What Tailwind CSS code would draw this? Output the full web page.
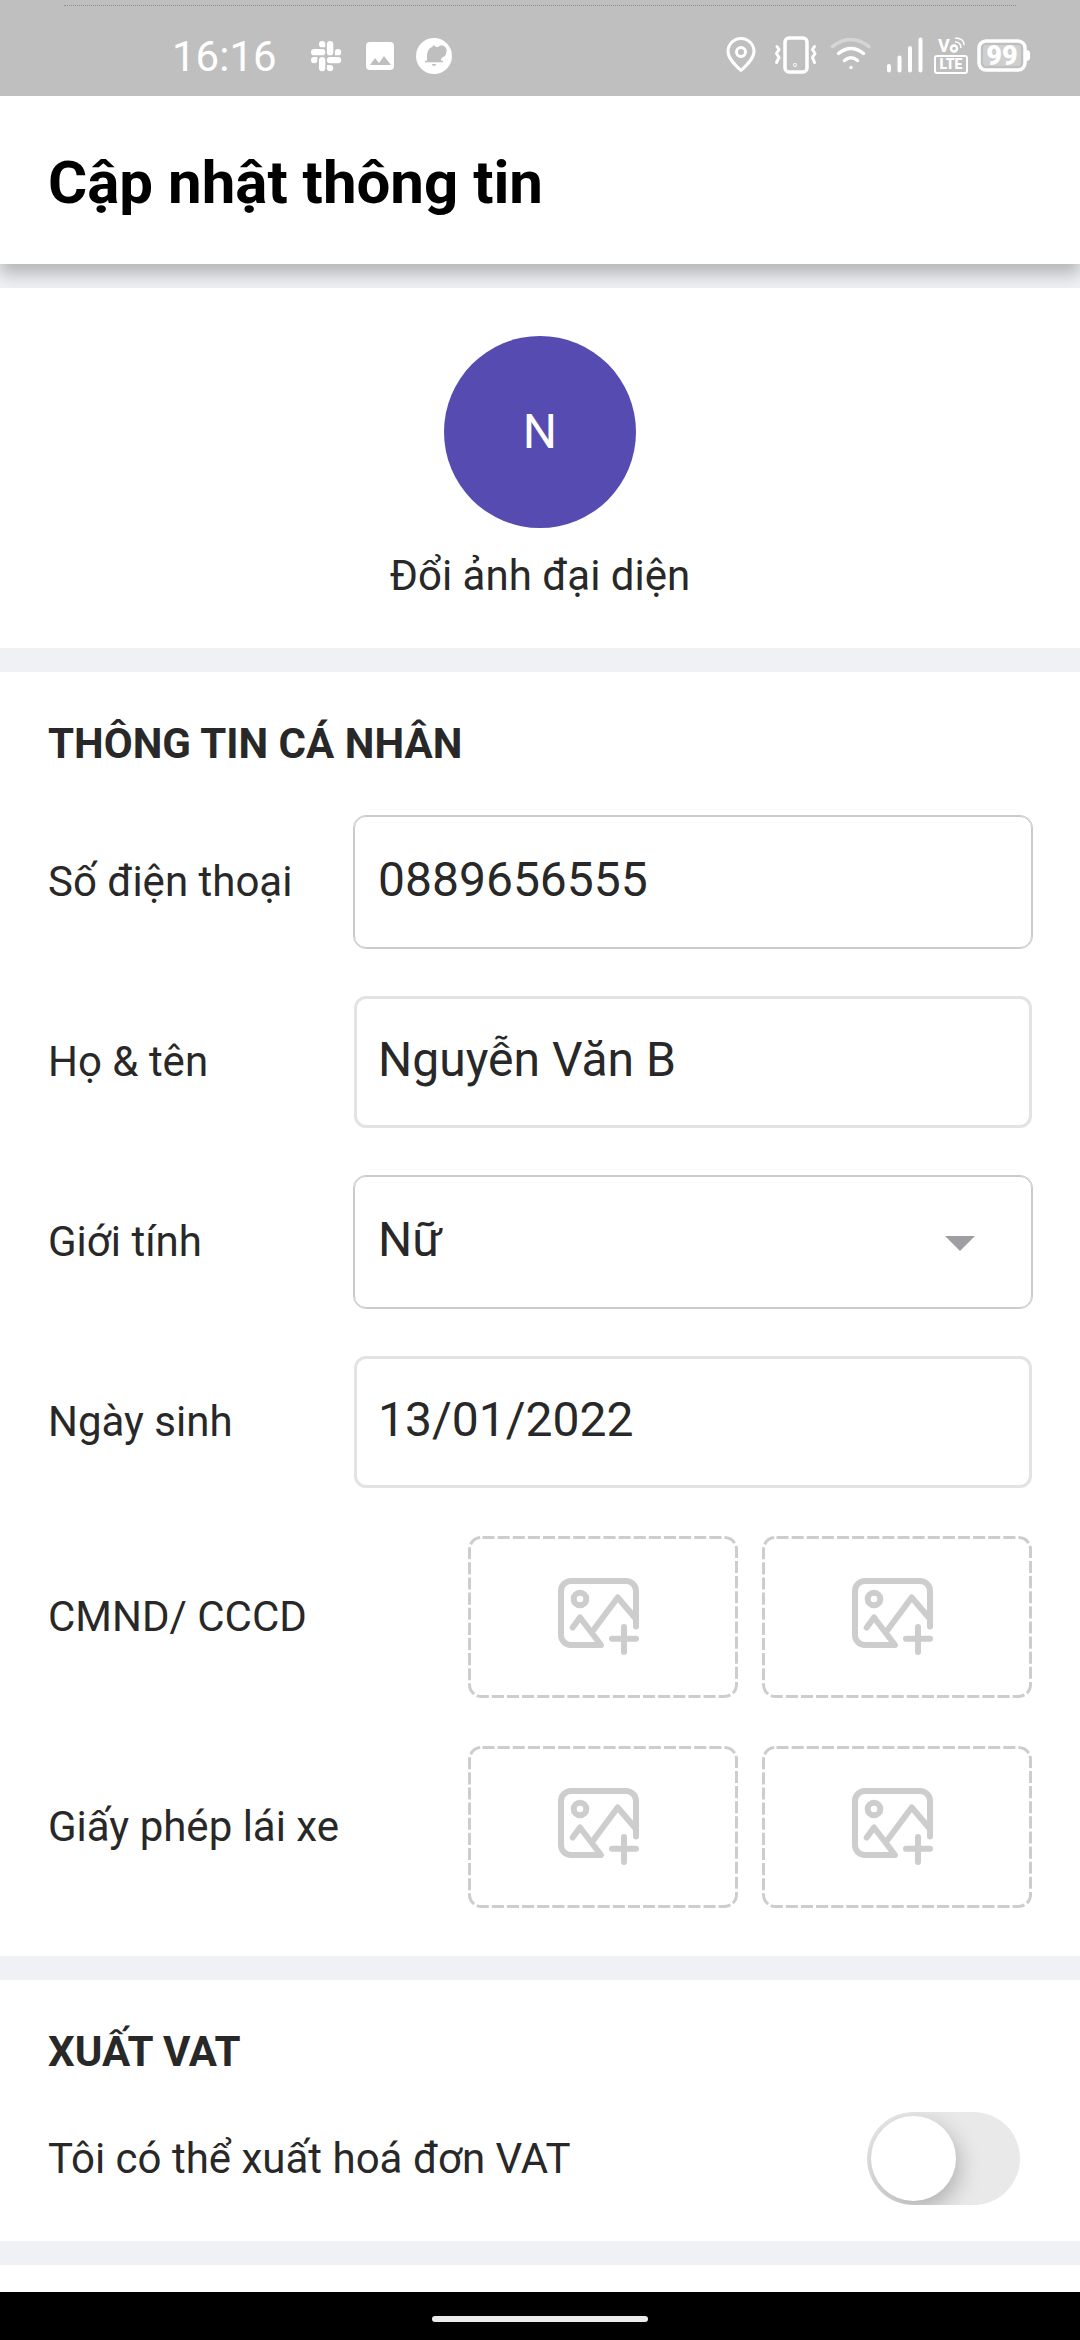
<!DOCTYPE html>
<html lang="vi">
<head>
  <meta charset="UTF-8">
  <meta name="viewport" content="width=device-width, initial-scale=1.0">
  <title>Cập nhật thông tin</title>
  <script src="https://cdn.jsdelivr.net/npm/@tailwindcss/browser@4"></script>
</head>
<body class="min-h-screen flex flex-col bg-[#f0f1f5] font-[Roboto,'Noto_Sans',sans-serif] text-[42px] leading-[48px] text-[#282828]">

  <!-- Status bar -->
  <div class="relative z-10 h-24 shrink-0 bg-[#bfbfbf] text-white flex items-center justify-between pt-4 pl-[172px] pr-[49px]">
    <div class="absolute top-[5px] left-16 right-16 border-t border-dotted border-[#8f8f8f]"></div>
    <div class="flex items-center gap-4">
      <span class="w-[122px] pt-[2px]">16:16</span>
      <svg class="w-9 h-10" viewBox="0 0 36 40" fill="currentColor">
        <path transform="translate(1 5) scale(1.26)" d="M5.042 15.165a2.528 2.528 0 0 1-2.52 2.523A2.528 2.528 0 0 1 0 15.165a2.527 2.527 0 0 1 2.522-2.52h2.52v2.52zM6.313 15.165a2.527 2.527 0 0 1 2.521-2.52 2.527 2.527 0 0 1 2.521 2.52v6.313A2.528 2.528 0 0 1 8.834 24a2.528 2.528 0 0 1-2.521-2.522v-6.313zM8.834 5.042a2.528 2.528 0 0 1-2.521-2.52A2.528 2.528 0 0 1 8.834 0a2.528 2.528 0 0 1 2.521 2.522v2.52H8.834zM8.834 6.313a2.528 2.528 0 0 1 2.521 2.521 2.528 2.528 0 0 1-2.521 2.521H2.522A2.528 2.528 0 0 1 0 8.834a2.528 2.528 0 0 1 2.522-2.521h6.312zM18.956 8.834a2.528 2.528 0 0 1 2.522-2.521A2.528 2.528 0 0 1 24 8.834a2.528 2.528 0 0 1-2.522 2.521h-2.522V8.834zM17.688 8.834a2.528 2.528 0 0 1-2.523 2.521 2.527 2.527 0 0 1-2.52-2.521V2.522A2.527 2.527 0 0 1 15.165 0a2.528 2.528 0 0 1 2.523 2.522v6.312zM15.165 18.956a2.528 2.528 0 0 1 2.523 2.522A2.528 2.528 0 0 1 15.165 24a2.527 2.527 0 0 1-2.52-2.522v-2.522h2.52zM15.165 17.688a2.527 2.527 0 0 1-2.52-2.523 2.526 2.526 0 0 1 2.52-2.52h6.313A2.527 2.527 0 0 1 24 15.165a2.528 2.528 0 0 1-2.522 2.523h-6.313z"/>
      </svg>
      <svg class="w-9 h-10" viewBox="0 0 36 40">
        <rect x="4" y="6" width="28" height="28" rx="4" fill="white"/>
        <path d="M8 29l5-7 4 5 5-7 7 9z" fill="#bfbfbf"/>
      </svg>
      <svg class="w-10 h-10" viewBox="0 0 40 40">
        <circle cx="20" cy="20" r="18" fill="white"/>
        <path d="M13 25V20q0-7 5-9l2-2 2 2h2q3-3 6-1 4 3 2 7 0 3-3 4-2 1-2 3v1z" fill="#bfbfbf"/>
        <path d="M11 25.500h18" stroke="#bfbfbf" stroke-width="1.600"/>
        <path d="M18 28h4q0 2-2 2t-2-2z" fill="#bfbfbf"/>
      </svg>
    </div>
    <div class="flex items-center gap-2">
      <!-- location -->
      <svg class="w-10 h-10" viewBox="0 0 40 40" fill="none" stroke="white" stroke-width="3" stroke-linejoin="round">
        <path d="M16 34.500C9 28 3 22 3 15.500a13 13 0 0 1 26 0C29 22 23 28 16 34.500z"/>
        <circle cx="16" cy="16" r="4.500"/>
      </svg>
      <!-- vibrate -->
      <svg class="w-12 h-10" viewBox="0 0 48 40" fill="none" stroke="white" stroke-width="3.500" stroke-linecap="round" stroke-linejoin="round">
        <rect x="12" y="2" width="22" height="34" rx="4"/>
        <path stroke-width="3" d="M4 10.500l2 3-2.500 4 2.500 4-2.500 5M41.500 10.500l-2 3 2.500 4-2.500 4 2 5"/>
        <circle cx="22" cy="29" r="0.400" stroke-width="3"/>
      </svg>
      <!-- wifi -->
      <svg class="w-12 h-10" viewBox="0 0 48 40" fill="none" stroke="white" stroke-width="3.500" stroke-linecap="round">
        <path stroke-opacity=".35" d="M3.500 10.500q18-14 36.500 0"/>
        <path d="M9.500 17.500q12.500-10 25 0M15.500 24.500q6.500-5.500 13 0"/>
        <circle cx="22" cy="31.500" r="1.700" fill="white" stroke="none"/>
      </svg>
      <!-- signal -->
      <svg class="w-10 h-10" viewBox="0 0 40 40" stroke="white" stroke-width="4" stroke-linecap="round">
        <path d="M4 30v4.500M14.500 21.500v13M25 12v22.500M35.500 3.500v31"/>
      </svg>
      <!-- VoLTE -->
      <svg class="w-9 h-10" viewBox="0 0 36 40" fill="none" stroke="white" stroke-width="2">
        <rect x="2" y="20" width="32" height="17" rx="2"/>
        <text x="18" y="33" fill="white" stroke="none" font-size="14" font-weight="900" text-anchor="middle">LTE</text>
        <text x="5" y="16" fill="white" stroke="none" font-size="18" font-weight="700">V</text>
        <circle cx="21" cy="12.500" r="3" stroke-width="2.500"/>
        <path d="M22 6q6 0 6 6M22 2q9 0 9 7" stroke-width="1.500"/>
      </svg>
      <!-- battery -->
      <svg class="w-[54px] h-10" viewBox="0 0 54 40">
        <rect x="2" y="5" width="46" height="29" rx="7" fill="none" stroke="white" stroke-width="3.500"/>
        <rect x="6" y="9" width="38" height="21" rx="3" fill="white" fill-opacity=".25"/>
        <path d="M49 14q4 0 4 3v5q0 3-4 3z" fill="white"/>
        <text x="25" y="29" fill="white" font-size="27" font-weight="900" text-anchor="middle">99</text>
      </svg>
    </div>
  </div>

  <!-- Header -->
  <header class="relative bg-white px-12 pt-[51px] pb-[45px] shadow-[0_10px_16px_rgba(0,0,0,0.25)]">
    <h1 class="text-[60px] leading-[72px] font-bold text-black">Cập nhật thông tin</h1>
  </header>

  <main class="relative flex-1 flex flex-col gap-6 pt-6">
    <!-- Ảnh đại diện -->
    <section class="bg-white py-12 flex justify-center">
      <button type="button" class="flex flex-col items-center gap-6">
        <span class="size-48 rounded-full bg-[#564bb1] text-white text-[48px] flex items-center justify-center">N</span>
        <span>Đổi ảnh đại diện</span>
      </button>
    </section>

    <!-- Thông tin cá nhân -->
    <section class="bg-white p-12 flex flex-col gap-12">
      <h2 class="font-bold">THÔNG TIN CÁ NHÂN</h2>

      <div class="flex items-center">
        <label for="phone" class="w-[306px] shrink-0">Số điện thoại</label>
        <input id="phone" type="tel" value="0889656555" class="flex-1 min-w-0 h-[132px] px-[23px] pb-[6px] text-[48px] border border-[#cbcbcb] outline outline-[#cbcbcb] rounded-xl">
      </div>

      <div class="flex items-center">
        <label for="name" class="w-[306px] shrink-0">Họ &amp; tên</label>
        <input id="name" type="text" value="Nguyễn Văn B" class="flex-1 min-w-0 h-[132px] px-[21px] pb-[6px] text-[48px] border-3 border-[#e3e3e3] rounded-xl">
      </div>

      <div class="flex items-center">
        <label for="gender" class="w-[306px] shrink-0">Giới tính</label>
        <div class="relative flex-1">
          <select id="gender" class="block appearance-none w-full h-[132px] px-[23px] pb-1 text-[48px] border border-[#cbcbcb] outline outline-[#cbcbcb] rounded-xl">
            <option selected>Nữ</option>
            <option>Nam</option>
          </select>
          <svg class="absolute right-[57px] top-[60px] w-[30px] h-[15px] pointer-events-none" viewBox="0 0 30 15"><path d="M0 0h30L15 15z" fill="#9f9fa3"/></svg>
        </div>
      </div>

      <div class="flex items-center">
        <label for="birthday" class="w-[306px] shrink-0">Ngày sinh</label>
        <input id="birthday" type="text" value="13/01/2022" class="flex-1 min-w-0 h-[132px] px-[21px] pb-[6px] text-[48px] border-3 border-[#e3e3e3] rounded-xl">
      </div>

      <!-- icon dùng chung cho các ô tải ảnh -->
      <svg class="hidden">
        <symbol id="add-photo" viewBox="0 0 270 162">
          <g fill="none" stroke="#cdcdcd">
            <rect x="1.500" y="1.500" width="267" height="159" rx="12" stroke-width="3" stroke-dasharray="12.100 3.020" stroke-dashoffset="-1"/>
            <g stroke-width="6" stroke-linecap="round" stroke-linejoin="round">
              <path d="M168 90.500V55a10 10 0 0 0-10-10H103a10 10 0 0 0-10 10V99a10 10 0 0 0 10 10H133L112 81.500 104.700 91.500"/>
              <path d="M125.500 94L149.700 61.500 168 83"/>
              <circle cx="112" cy="63" r="6.300"/>
              <path d="M156 91v25M144 102.700h24"/>
            </g>
          </g>
        </symbol>
      </svg>

      <div class="flex items-center">
        <p class="w-[420px] shrink-0">CMND/ CCCD</p>
        <div class="flex-1 grid grid-cols-2 gap-6">
          <button type="button" aria-label="CMND/ CCCD mặt trước"><svg class="block w-full h-[162px]"><use href="#add-photo"/></svg></button>
          <button type="button" aria-label="CMND/ CCCD mặt sau"><svg class="block w-full h-[162px]"><use href="#add-photo"/></svg></button>
        </div>
      </div>

      <div class="flex items-center">
        <p class="w-[420px] shrink-0">Giấy phép lái xe</p>
        <div class="flex-1 grid grid-cols-2 gap-6">
          <button type="button" aria-label="Giấy phép lái xe mặt trước"><svg class="block w-full h-[162px]"><use href="#add-photo"/></svg></button>
          <button type="button" aria-label="Giấy phép lái xe mặt sau"><svg class="block w-full h-[162px]"><use href="#add-photo"/></svg></button>
        </div>
      </div>
    </section>

    <!-- Xuất VAT -->
    <section class="bg-white px-12 pt-12 pb-9 flex flex-col gap-9">
      <h2 class="font-bold">XUẤT VAT</h2>
      <div class="flex items-center justify-between pr-3">
        <label for="vat">Tôi có thể xuất hoá đơn VAT</label>
        <input id="vat" type="checkbox" role="switch" class="appearance-none w-[153px] h-[93px] p-1 rounded-full bg-[#e9e9ea] overflow-hidden before:block before:size-[85px] before:rounded-full before:bg-white before:shadow-[3px_8px_22px_rgba(0,0,0,0.25)] checked:bg-[#564bb1] checked:before:ml-auto">
      </div>
    </section>

    <section class="bg-white flex-1"></section>
  </main>

  <!-- Thanh điều hướng -->
  <footer class="relative bg-black h-12 shrink-0 flex items-center justify-center pt-[6px]">
    <div class="w-54 h-[6px] rounded-full bg-[#ececec]"></div>
  </footer>

</body>
</html>
